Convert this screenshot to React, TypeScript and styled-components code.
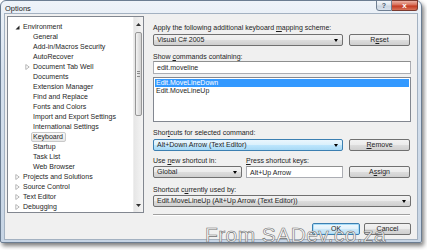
import styled, { createGlobalStyle } from "styled-components";

const GlobalStyle = createGlobalStyle`
  html, body {
    margin: 0;
    padding: 0;
    background: #ffffff;
  }
  body {
    font-family: "Liberation Sans", Arial, sans-serif;
    font-size: 7px;
    color: #1e1e1e;
  }
  #root {
    width: 427px;
    height: 250px;
    overflow: hidden;
  }
`;

const Window = styled.div`
  position: relative;
  width: 422px;
  height: 243px;
  box-sizing: border-box;
  border: 1px solid #6b7d92;
  border-radius: 6px 6px 2px 2px;
  background: linear-gradient(#eef3f9, #d6e1ee 30%, #c6d4e4);
  box-shadow: 2px 3px 4px rgba(0, 0, 0, 0.5);
  display: flex;
  flex-direction: column;
  padding: 0 3px 2px 3px;
`;

const TitleBar = styled.div`
  height: 12px;
  display: flex;
  justify-content: space-between;
  align-items: flex-start;
`;

const TitleText = styled.div`
  padding: 3px 0 0 1px;
  font-size: 7.5px;
  line-height: 9px;
  color: #1b1b1b;
`;

const CaptionButtons = styled.div`
  display: flex;
  margin-top: -1px;
`;

const CaptionButton = styled.div<{ close?: boolean }>`
  width: ${(p) => (p.close ? 26 : 16)}px;
  height: 11px;
  box-sizing: border-box;
  border: 1px solid ${(p) => (p.close ? "#7a3a30" : "#6f7f93")};
  border-left-width: ${(p) => (p.close ? 0 : 1)}px;
  border-radius: ${(p) => (p.close ? "0 0 3px 0" : "0 0 0 3px")};
  background: ${(p) =>
    p.close
      ? "linear-gradient(#eab1a5, #d86c56 45%, #c43a22 55%, #d7735a)"
      : "linear-gradient(#f3f6fa, #dfe6ee 45%, #cbd5e1 55%, #d8e1ec)"};
  color: ${(p) => (p.close ? "#ffffff" : "#4a5a6e")};
  font-size: ${(p) => (p.close ? 8 : 7)}px;
  font-weight: bold;
  line-height: 9px;
  text-align: center;
`;

const Client = styled.div`
  flex: 1;
  display: flex;
  background: #f0f0f0;
  border: 1px solid #a3b1c1;
  padding: 2px 0 0 2px;
`;

const Tree = styled.div`
  width: 137px;
  height: 197px;
  box-sizing: border-box;
  border: 1px solid #828790;
  background: #ffffff;
  display: flex;
`;

const TreeList = styled.div`
  flex: 1;
  padding-top: 5px;
  overflow: hidden;
`;

const TreeRow = styled.div<{ level: number }>`
  height: 10px;
  display: flex;
  align-items: center;
  padding-left: ${(p) => 5 + p.level * 10}px;
  white-space: nowrap;
`;

const Expander = styled.div`
  width: 8px;
  height: 10px;
  display: flex;
  align-items: center;
  justify-content: center;
`;

const TreeLabel = styled.span<{ selected?: boolean }>`
  padding: 0 2px 0 1px;
  height: 8px;
  line-height: 8px;
  border: 1px solid ${(p) => (p.selected ? "#c9c9c9" : "transparent")};
  border-radius: 2px;
  background: ${(p) =>
    p.selected ? "linear-gradient(#fafafa, #e8e8e8)" : "transparent"};
`;

const ScrollBar = styled.div`
  width: 9px;
  display: flex;
  flex-direction: column;
  align-items: center;
  background: linear-gradient(90deg, #e6e6e6, #f4f4f4);
  border-left: 1px solid #eeeeee;
`;

const ScrollArrow = styled.div<{ h: number }>`
  height: ${(p) => p.h}px;
  display: flex;
  align-items: center;
  justify-content: center;
`;

const Thumb = styled.div`
  width: 7px;
  height: 84px;
  box-sizing: border-box;
  border: 1px solid #979797;
  border-radius: 2px;
  background: linear-gradient(90deg, #f4f4f4, #e2e2e2 50%, #d3d3d3);
  display: flex;
  align-items: center;
  justify-content: center;
`;

const Grip = styled.div`
  width: 3px;
  height: 4px;
  border-top: 1px solid #8a8a8a;
  border-bottom: 1px solid #8a8a8a;
  position: relative;
  &::after {
    content: "";
    display: block;
    margin-top: 1px;
    height: 1px;
    background: #8a8a8a;
  }
`;

const Panel = styled.div`
  width: 258px;
  margin-left: 9px;
  padding-top: 7px;
  display: flex;
  flex-direction: column;
`;

const Label = styled.div<{ mt?: number }>`
  height: 9px;
  line-height: 9px;
  margin-top: ${(p) => p.mt ?? 0}px;
  white-space: nowrap;
`;

const Key = styled.span`
  text-decoration: underline;
`;

const Row = styled.div<{ mt?: number; gap?: number }>`
  display: flex;
  gap: ${(p) => p.gap ?? 6}px;
  margin-top: ${(p) => p.mt ?? 0}px;
`;

const Combo = styled.div<{ w?: number; focused?: boolean }>`
  width: ${(p) => (p.w ? `${p.w}px` : "100%")};
  height: 12px;
  box-sizing: border-box;
  border: 1px solid ${(p) => (p.focused ? "#3c7fb1" : "#707070")};
  border-radius: 2px;
  background: ${(p) =>
    p.focused
      ? "linear-gradient(#eaf6fd, #d9f0fc 50%, #bee6fd 50%, #a7d9f5)"
      : "linear-gradient(#f2f2f2, #ebebeb 50%, #dddddd 50%, #cfcfcf)"};
  display: flex;
  align-items: center;
  justify-content: space-between;
  padding: 0 4px 0 3px;
  line-height: 10px;
  white-space: nowrap;
`;

const Arrow = styled.span`
  width: 0;
  height: 0;
  border-left: 2.5px solid transparent;
  border-right: 2.5px solid transparent;
  border-top: 3px solid #000000;
`;

const Button = styled.div<{ w?: number; primary?: boolean }>`
  width: ${(p) => p.w ?? 61}px;
  height: 12px;
  box-sizing: border-box;
  border: 1px solid ${(p) => (p.primary ? "#3c7fb1" : "#707070")};
  border-radius: 2px;
  background: ${(p) =>
    p.primary
      ? "linear-gradient(#f0f8fd, #e0f1fb 50%, #cce8f8 50%, #bfe0f3)"
      : "linear-gradient(#f2f2f2, #ebebeb 50%, #dddddd 50%, #cfcfcf)"};
  box-shadow: ${(p) => (p.primary ? "inset 0 0 0 1px #a8dcf8" : "none")};
  text-align: center;
  line-height: 10px;
`;

const TextBox = styled.div<{ w?: number; h?: number }>`
  width: ${(p) => (p.w ? `${p.w}px` : "100%")};
  height: ${(p) => p.h ?? 13}px;
  box-sizing: border-box;
  border: 1px solid #abadb3;
  border-top-color: #8e8f8f;
  background: #ffffff;
  padding-left: 3px;
  display: flex;
  align-items: center;
`;

const ListBox = styled.div`
  height: 45px;
  margin-top: 3px;
  box-sizing: border-box;
  border: 1px solid #828790;
  background: #ffffff;
  padding: 1px;
`;

const ListItem = styled.div<{ selected?: boolean }>`
  height: 8px;
  line-height: 8px;
  padding-left: 1px;
  background: ${(p) => (p.selected ? "#3399ff" : "transparent")};
  color: ${(p) => (p.selected ? "#ffffff" : "#1e1e1e")};
`;

const Separator = styled.div`
  margin-top: 7px;
  width: 257px;
  border-top: 1px solid #a0a0a0;
  border-bottom: 1px solid #ffffff;
`;

const Footer = styled.div`
  display: flex;
  justify-content: flex-end;
  gap: 4px;
  margin-top: 7px;
  padding-right: 0px;
`;

const Watermark = styled.div`
  position: absolute;
  left: 204px;
  top: 222px;
  font-family: "Liberation Sans", Arial, sans-serif;
  font-size: 21px;
  letter-spacing: 0.4px;
  color: rgba(255, 255, 255, 0.9);
  -webkit-text-stroke: 0.6px #6f6f6f;
  white-space: nowrap;
`;

type Node = {
  label: string;
  level: number;
  exp?: "open" | "closed";
  selected?: boolean;
};

const nodes: Node[] = [
  { label: "Environment", level: 0, exp: "open" },
  { label: "General", level: 1 },
  { label: "Add-in/Macros Security", level: 1 },
  { label: "AutoRecover", level: 1 },
  { label: "Document Tab Well", level: 1, exp: "closed" },
  { label: "Documents", level: 1 },
  { label: "Extension Manager", level: 1 },
  { label: "Find and Replace", level: 1 },
  { label: "Fonts and Colors", level: 1 },
  { label: "Import and Export Settings", level: 1 },
  { label: "International Settings", level: 1 },
  { label: "Keyboard", level: 1, selected: true },
  { label: "Startup", level: 1 },
  { label: "Task List", level: 1 },
  { label: "Web Browser", level: 1 },
  { label: "Projects and Solutions", level: 0, exp: "closed" },
  { label: "Source Control", level: 0, exp: "closed" },
  { label: "Text Editor", level: 0, exp: "closed" },
  { label: "Debugging", level: 0, exp: "closed" },
];

function ExpandIcon({ kind }: { kind?: "open" | "closed" }) {
  if (kind === "open")
    return (
      <svg width="5" height="5" viewBox="0 0 5 5">
        <path d="M4.5 0.5 L4.5 4.5 L0.5 4.5 Z" fill="#262626" />
      </svg>
    );
  if (kind === "closed")
    return (
      <svg width="5" height="6" viewBox="0 0 5 6">
        <path d="M0.8 0.5 L4.2 3 L0.8 5.5 Z" fill="none" stroke="#a6a6a6" strokeWidth="0.8" />
      </svg>
    );
  return null;
}

function ScrollGlyph({ up }: { up?: boolean }) {
  return (
    <svg width="5" height="3" viewBox="0 0 5 3">
      <path d={up ? "M0 3 L2.5 0 L5 3 Z" : "M0 0 L2.5 3 L5 0 Z"} fill="#333" />
    </svg>
  );
}

export default function App() {
  return (
    <>
      <GlobalStyle />
      <Window>
        <TitleBar>
          <TitleText>Options</TitleText>
          <CaptionButtons>
            <CaptionButton>?</CaptionButton>
            <CaptionButton close>x</CaptionButton>
          </CaptionButtons>
        </TitleBar>
        <Client>
          <Tree>
            <TreeList>
              {nodes.map((n) => (
                <TreeRow key={n.label} level={n.level}>
                  <Expander>
                    <ExpandIcon kind={n.exp} />
                  </Expander>
                  <TreeLabel selected={n.selected}>{n.label}</TreeLabel>
                </TreeRow>
              ))}
            </TreeList>
            <ScrollBar>
              <ScrollArrow h={15}>
                <ScrollGlyph up />
              </ScrollArrow>
              <Thumb>
                <Grip />
              </Thumb>
              <div style={{ flex: 1 }} />
              <ScrollArrow h={14}>
                <ScrollGlyph />
              </ScrollArrow>
            </ScrollBar>
          </Tree>
          <Panel>
            <Label>
              Apply the following additional keyboard <Key>m</Key>apping scheme:
            </Label>
            <Row mt={2}>
              <Combo w={190}>
                <span>Visual C# 2005</span>
                <Arrow />
              </Combo>
              <Button>
                R<Key>e</Key>set
              </Button>
            </Row>
            <Label mt={6}>
              Show <Key>c</Key>ommands containing:
            </Label>
            <TextBox>edit.moveline</TextBox>
            <ListBox>
              <ListItem selected>Edit.MoveLineDown</ListItem>
              <ListItem>Edit.MoveLineUp</ListItem>
            </ListBox>
            <Label mt={6}>
              Shor<Key>t</Key>cuts for selected command:
            </Label>
            <Row mt={2}>
              <Combo w={190} focused>
                <span>Alt+Down Arrow (Text Editor)</span>
                <Arrow />
              </Combo>
              <Button>
                <Key>R</Key>emove
              </Button>
            </Row>
            <Row mt={5} gap={0}>
              <Label style={{ width: 93 }}>
                Use <Key>n</Key>ew shortcut in:
              </Label>
              <Label>
                <Key>P</Key>ress shortcut keys:
              </Label>
            </Row>
            <Row mt={1}>
              <Combo w={89}>
                <span>Global</span>
                <Arrow />
              </Combo>
              <TextBox w={97} h={12} style={{ marginLeft: -2 }}>
                Alt+Up Arrow
              </TextBox>
              <Button>
                A<Key>s</Key>sign
              </Button>
            </Row>
            <Label mt={7}>
              Shortcut c<Key>u</Key>rrently used by:
            </Label>
            <Row mt={1}>
              <Combo>
                <span>Edit.MoveLineUp (Alt+Up Arrow (Text Editor))</span>
                <Arrow />
              </Combo>
            </Row>
            <Separator />
            <Footer>
              <Button w={48} primary>
                OK
              </Button>
              <Button w={47}>Cancel</Button>
            </Footer>
          </Panel>
        </Client>
        <Watermark>From SADev.co.za</Watermark>
      </Window>
    </>
  );
}
